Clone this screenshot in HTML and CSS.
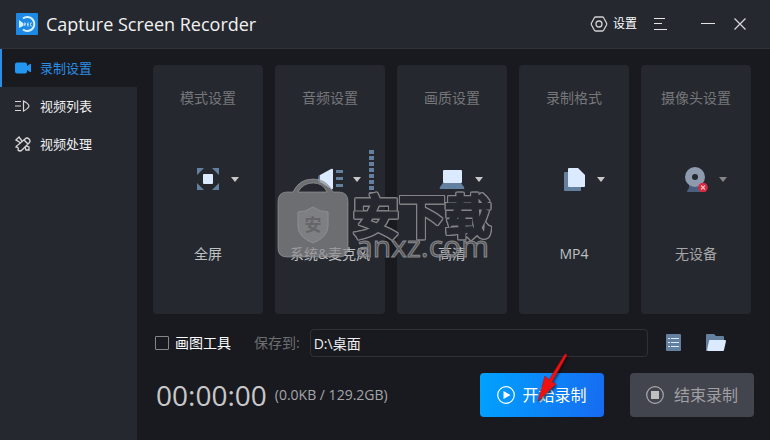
FILE: index.html
```html
<!DOCTYPE html>
<html lang="zh-CN">
<head>
    <meta charset="UTF-8">
    <meta name="viewport" content="width=device-width, initial-scale=1.0">
    <title>Capture Screen Recorder</title>
    <link rel="stylesheet" href="styles.css">
</head>
<body>
    <header class="titlebar">
        <svg class="logo" width="22" height="22" viewBox="0 0 22 22">
            <rect width="22" height="22" rx="1" fill="#1e88e5"/>
            <path d="M7 5.500A7 7 0 1 1 7 16.500" fill="none" stroke="#d6f1ff" stroke-width="2"/>
            <path d="M3 7l4 3v3l-4 2z" fill="#d6f1ff"/>
            <path d="M8 13v-3h1.500v1.500H8l1.500 1.500M13 10h-1.500v3H13M11.500 11.500H13M16 10h-1.500v3H16" fill="none" stroke="#d6f1ff" stroke-width=".7"/>
        </svg>
        <h1>Capture Screen Recorder</h1>
        <div class="window-tools">
            <button class="settings-button" type="button">
                <svg width="18" height="16" viewBox="0 0 18 16" fill="none" stroke="#d0d1d3" stroke-width="1.300">
                    <path d="M5.500 1h7q.7 0 1.100.7l2.900 5.300q.5 1 0 2l-2.900 5.300q-.4.700-1.100.7h-7q-.7 0-1.100-.7L1.500 9q-.5-1 0-2l2.900-5.300Q4.800 1 5.500 1z"/>
                    <circle cx="9" cy="8" r="3"/>
                </svg>
                设置
            </button>
            <button class="menu-button" type="button" aria-label="菜单">
                <svg width="14" height="12" viewBox="0 0 14 12" stroke="#e3e3e4"><path d="M0 .5h11M0 5.500h8M0 11.500h13"/></svg>
            </button>
            <button class="min-button" type="button" aria-label="最小化">
                <svg width="14" height="12" viewBox="0 0 14 12" stroke="#e3e3e4"><path d="M0 5.500h14"/></svg>
            </button>
            <button type="button" aria-label="关闭">
                <svg width="12" height="12" viewBox="0 0 12 12" stroke="#d5d5d7" stroke-width="1.300"><path d="M.5.500l11 11M11.500.500l-11 11"/></svg>
            </button>
        </div>
    </header>

    <div class="body">
        <nav class="sidebar">
            <a class="nav-item active" href="#record">
                <svg width="17" height="14" viewBox="0 0 17 14" fill="#2196f3"><path d="M2 1.500h8q2 0 2 2V5l3-2h1v8h-1l-3-2v1.500q0 2-2 2H2q-2 0-2-2v-7q0-2 2-2z"/></svg>
                录制设置
            </a>
            <a class="nav-item" href="#list">
                <svg width="17" height="14" viewBox="0 0 17 14" fill="none" stroke="#d8d8da" stroke-width="1.200"><path d="M0 2.500h6M0 7h6M0 11.500h6M8.500 2v10q5-2.500 5.500-5-.5-2.500-5.500-5z"/></svg>
                视频列表
            </a>
            <a class="nav-item" href="#tools">
                <svg width="17" height="16" viewBox="0 0 17 16" fill="none" stroke="#d8d8da" stroke-width="1.300">
                    <path d="M6 7L1 4l3-3 3 4M10 11l1 3h3v-3l-3-1"/>
                    <path d="M10 3q2-2 4 0t0 4l-7 7q-2 2-4 0 1-3-2-3 0-1 2-2zM9 4l4 4"/>
                </svg>
                视频处理
            </a>
        </nav>

        <main class="content">
            <section class="cards">
                <div class="card">
                    <h2>模式设置</h2>
                    <button class="picker" type="button" aria-label="模式设置">
                        <svg width="26" height="26" viewBox="0 0 26 26">
                            <path d="M2 2h7L2 9zM17 2h7v7zM2 17l7 7H2zM24 17v7h-7z" fill="#64809f"/>
                            <rect x="8" y="8" width="10" height="10" rx="1" fill="#dbeafe"/>
                        </svg>
                        <span class="caret"></span>
                    </button>
                    <p>全屏</p>
                </div>
                <div class="card">
                    <h2>音频设置</h2>
                    <button class="picker" type="button" aria-label="音频设置">
                        <svg width="26" height="26" viewBox="0 0 26 26">
                            <path d="M5 9H2q-2 4 0 8h3zM19 4h7v3h-7zM19 11h7v3h-7zM19 18h7v3h-7z" fill="#64809f"/>
                            <path d="M3 9l11-6q2-1 2 1v18q0 2-2 1L3 16z" fill="#dbeafe"/>
                        </svg>
                        <span class="caret"></span>
                    </button>
                    <p>系统&amp;麦克风</p>
                    <div class="meter"></div>
                </div>
                <div class="card">
                    <h2>画质设置</h2>
                    <button class="picker" type="button" aria-label="画质设置">
                        <svg width="26" height="26" viewBox="0 0 26 26">
                            <path d="M4 17h18l3 4q1 2-1 2H2q-2 0-1-2z" fill="#64809f"/>
                            <rect x="4" y="4" width="19" height="13" rx="1" fill="#dbeafe"/>
                        </svg>
                        <span class="caret"></span>
                    </button>
                    <p>高清</p>
                </div>
                <div class="card">
                    <h2>录制格式</h2>
                    <button class="picker" type="button" aria-label="录制格式">
                        <svg width="26" height="26" viewBox="0 0 26 26">
                            <rect x="3" y="6" width="17" height="19" rx="1" fill="#64809f"/>
                            <path d="M8 2h9l7 7v11q0 1-1 1H8q-1 0-1-1V3q0-1 1-1z" fill="#dbeafe"/>
                        </svg>
                        <span class="caret"></span>
                    </button>
                    <p>MP4</p>
                </div>
                <div class="card disabled">
                    <h2>摄像头设置</h2>
                    <button class="picker" type="button" aria-label="摄像头设置">
                        <svg width="26" height="26" viewBox="0 0 26 26">
                            <path d="M6 19h13v7H4q0-2 2-4z" fill="#4a5f7d"/>
                            <circle cx="12" cy="11" r="10" fill="#8e9bae"/>
                            <circle cx="12" cy="11" r="3" fill="#252830"/>
                            <circle cx="20" cy="21.500" r="4.800" fill="#d9293d"/>
                            <path d="M18 19.500l4 4M22 19.500l-4 4" stroke="#f5b9c0" stroke-width="1.300"/>
                        </svg>
                        <span class="caret"></span>
                    </button>
                    <p>无设备</p>
                </div>
            </section>

            <section class="options">
                <label class="draw-tool"><input type="checkbox">画图工具</label>
                <label class="save-label" for="savePath">保存到:</label>
                <input class="save-path" type="text" id="savePath" value="D:\桌面">
                <button type="button" aria-label="文件列表">
                    <svg width="16" height="18" viewBox="0 0 16 18">
                        <rect width="15" height="17" rx="1" fill="#64809f"/>
                        <path d="M2 4.500h2M5 4.500h8M2 8.500h2M5 8.500h8M2 12.500h2M5 12.500h8" stroke="#dbeafe" stroke-width="1.200"/>
                    </svg>
                </button>
                <button type="button" aria-label="打开文件夹">
                    <svg width="20" height="18" viewBox="0 0 20 18">
                        <path d="M1 0h7l2 2h7q1 0 1 1v4H4L1 17H0V1q0-1 1-1z" fill="#64809f"/>
                        <path d="M4 6h15q1 0 1 1l-2 9q0 1-1 1H2q-1 0-1-1l2-9q0-1 1-1z" fill="#dbeafe"/>
                    </svg>
                </button>
            </section>

            <section class="actions">
                <span class="timer">00:00:00</span>
                <span class="size">(0.0KB / 129.2GB)</span>
                <button class="record start" type="button">
                    <svg width="18" height="18" viewBox="0 0 18 18">
                        <circle cx="9" cy="9" r="8.300" fill="none" stroke="#fff" stroke-width="1.200"/>
                        <path d="M6.500 5l7 4-7 4z" fill="#fff"/>
                    </svg>
                    开始录制
                </button>
                <button class="record stop" type="button" disabled>
                    <svg width="18" height="18" viewBox="0 0 18 18">
                        <circle cx="9" cy="9" r="8.300" fill="none" stroke="#a9a9ac" stroke-width="1.200"/>
                        <rect x="5" y="5" width="8" height="8" fill="#c0c0c0"/>
                    </svg>
                    结束录制
                </button>
            </section>
        </main>
    </div>

    <!-- site watermark over the cards -->
    <div class="watermark">
        <div class="bag">
            <svg width="72" height="80" viewBox="0 0 72 80">
                <path d="M10 14h6Q22 1 36 1t20 13h6q9 0 9 10v46q0 9-9 9H10q-9 0-9-9V24q0-10 9-10zM21 14h29Q46 5 36 5T21 14z" fill="#8c8c8e" fill-opacity=".7" stroke="#a0a0a2" stroke-opacity=".6" fill-rule="evenodd"/>
                <path d="M36 29q7 5 15 5v14q0 11-15 17-15-6-15-17V34q8 0 15-5z" fill="#98989a" fill-opacity=".4" stroke="#8e8e90"/>
            </svg>
            <span class="bag-mark">安</span>
        </div>
        <div class="brand">
            <span class="brand-name">安下载</span>
            <span class="brand-site">anxz.com</span>
        </div>
    </div>

    <svg class="pointer" width="36" height="54" viewBox="0 0 36 54">
        <path d="M29 2l2 1-15 27 4 2L2 49l7-25 4 4z" fill="#f01010" stroke="#b50c12" stroke-width=".6"/>
    </svg>
</body>
</html>
```

FILE: styles.css
```css
* {
    margin: 0;
    padding: 0;
    box-sizing: border-box;
}

body {
    position: relative;
    display: flex;
    flex-direction: column;
    min-height: 100vh;
    background: #191a1f;
    color: #e6e6e6;
    font-family: "Open Sans", "Noto Sans CJK SC", sans-serif;
    font-size: 14px;
    line-height: 20px;
}

button {
    display: flex;
    align-items: center;
    border: none;
    background: none;
    color: inherit;
    font: inherit;
    cursor: pointer;
}

svg {
    display: block;
    flex-shrink: 0;
}

.titlebar {
    display: flex;
    align-items: center;
    height: 49px;
    padding: 0 24px 0 16px;
    background: #25282f;
    border-bottom: 1px solid #303238;
}

.titlebar h1 {
    margin-left: 8px;
    font-size: 18px;
    font-weight: 400;
    color: #f2f2f2;
}

.window-tools {
    display: flex;
    align-items: center;
    margin-left: auto;
}

.settings-button {
    gap: 5px;
    font-size: 12px;
    color: #fff;
}

.menu-button {
    margin-left: 17px;
}

.min-button {
    margin: 0 19px 0 33px;
}

.body {
    display: flex;
    flex: 1;
}

.sidebar {
    width: 137px;
    flex-shrink: 0;
    background: #25282f;
}

.nav-item {
    display: flex;
    align-items: center;
    gap: 8px;
    height: 38px;
    padding-left: 15px;
    font-size: 13px;
    color: #f0f0f0;
    text-decoration: none;
}

.nav-item.active {
    padding-left: 13px;
    border-left: 2px solid #2b8de3;
    background: #191a1f;
    color: #2b8de3;
}

.content {
    flex: 1;
    min-width: 0;
    padding: 16px 16px 20px;
}

.cards {
    display: grid;
    grid-template-columns: repeat(5, 1fr);
    gap: 12px;
    margin-right: 3px;
}

.card {
    position: relative;
    display: flex;
    flex-direction: column;
    align-items: center;
    padding: 23px 0 50px;
    border-radius: 4px;
    background: #25282f;
}

.card h2 {
    font-size: 14px;
    font-weight: 400;
    color: #76777a;
}

.card p {
    color: #bfc0c2;
}

.picker {
    gap: 10px;
    margin: 58px 0 52px 20px;
}

.caret {
    margin-right: 3px;
    border: 4px solid transparent;
    border-top: 5px solid #c8c8c8;
    border-bottom: none;
}

.disabled .caret {
    border-top-color: #858688;
}

.disabled p {
    color: #a5a6a8;
}

/* level blocks */
.meter {
    position: absolute;
    top: 85px;
    right: 11px;
    width: 5px;
    height: 58px;
    background: repeating-linear-gradient(#64809f 0 4px, transparent 4px 6px);
}

.options {
    display: flex;
    align-items: center;
    margin-top: 15px;
    padding-right: 28px;
}

.draw-tool {
    display: flex;
    align-items: center;
    gap: 6px;
    margin-left: 2px;
    color: #fff;
}

.draw-tool input {
    appearance: none;
    width: 14px;
    height: 14px;
    border: 1px solid #85868a;
    border-radius: 1px;
}

.save-label {
    margin: 0 10px 0 23px;
    color: #6d6e71;
}

.save-path {
    flex: 1;
    min-width: 0;
    height: 28px;
    margin-right: 18px;
    padding: 0 3px;
    border: 1px solid #303136;
    border-radius: 4px;
    background: none;
    color: #f0f0f0;
    font: inherit;
}

.options button + button {
    margin-left: 24px;
}

.actions {
    display: flex;
    align-items: center;
    margin-top: 16px;
}

.timer {
    margin-left: 3px;
    font-size: 28px;
    line-height: 44px;
    color: #c8c8c8;
}

.size {
    margin: 0 auto 0 8px;
    color: #a5a6a8;
}

.record {
    justify-content: center;
    width: 124px;
    height: 44px;
    gap: 7px;
    border-radius: 4px;
    font-size: 16px;
}

.start {
    margin-right: 26px;
    background: linear-gradient(100deg, #00a2ff, #176bf0);
    color: #fff;
}

.stop {
    gap: 10px;
    background: #43454e;
    color: #a0a0a3;
}

.watermark {
    position: absolute;
    top: 178px;
    left: 277px;
    display: flex;
    gap: 4px;
    pointer-events: none;
}

.bag {
    display: grid;
    place-items: center;
}

.bag svg,
.bag-mark {
    grid-area: 1 / 1;
}

.bag-mark {
    padding-top: 14px;
    font-size: 17px;
    font-weight: 700;
    color: #666668;
}

.brand {
    display: flex;
    flex-direction: column;
    padding-top: 12px;
}

/* fat dark letters with a grey rim */
.brand-name {
    font-family: "Noto Sans CJK SC", sans-serif;
    font-size: 46px;
    font-weight: 500;
    line-height: 46px;
    color: #25282f;
    -webkit-text-stroke: 3px #25282f;
    filter: drop-shadow(1px 0 #858588) drop-shadow(-1px 0 #858588) drop-shadow(0 1px #858588) drop-shadow(0 -1px #858588);
}

.brand-site {
    margin-left: 3px;
    font-size: 30px;
    line-height: 20px;
    color: rgba(110, 110, 114, 0.6);
    -webkit-text-stroke: 1px #88888b;
}

.pointer {
    position: absolute;
    top: 352px;
    left: 536px;
    filter: drop-shadow(1px 2px 1px rgba(0, 0, 0, 0.5));
}
```
